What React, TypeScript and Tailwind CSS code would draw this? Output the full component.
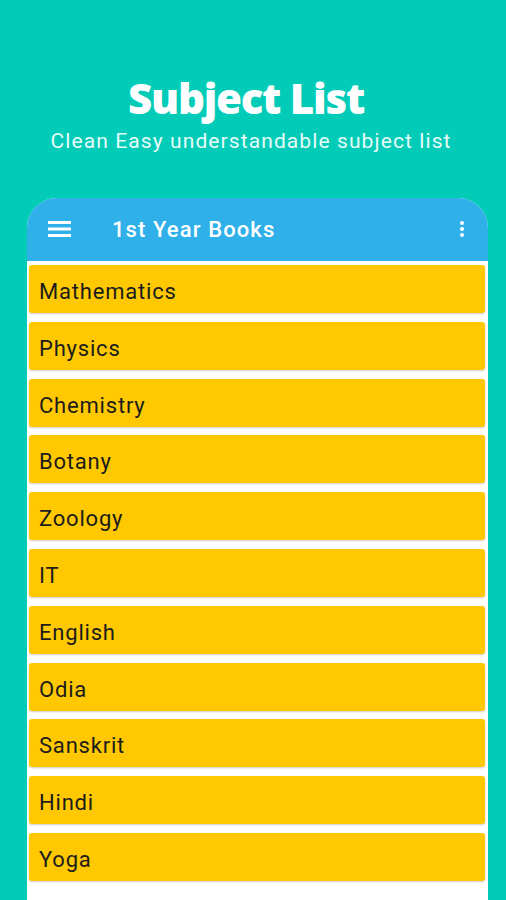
import React from "react";

const subjects = [
  "Mathematics",
  "Physics",
  "Chemistry",
  "Botany",
  "Zoology",
  "IT",
  "English",
  "Odia",
  "Sanskrit",
  "Hindi",
  "Yoga",
];

export default function App() {
  return (
    <div className="w-[506px] h-[900px] overflow-hidden bg-[#02ccb8] flex flex-col">
      <div className="pt-[74px] flex flex-col items-center">
        <h1
          className="text-white font-extrabold text-[42px] leading-[48px] tracking-[-1.25px] ml-[-14px]"
          style={{ fontFamily: '"Open Sans", sans-serif' }}
        >
          Subject List
        </h1>
        <p
          className="text-[#e6fbf7] text-[21px] leading-[26px] mt-[6px] tracking-[1.1px] ml-[-4px]"
          style={{ fontFamily: 'Roboto, sans-serif' }}
        >
          Clean Easy understandable subject list
        </p>
      </div>
      <div className="mt-[44px] ml-[27px] w-[461px] flex-1 rounded-t-[30px] bg-white overflow-hidden flex flex-col">
        <div className="h-[63px] bg-[#2fb0e9] flex items-center pl-[21px] pr-[24px] shrink-0">
          <svg width="23" height="16" viewBox="0 0 23 16" className="mt-[-2px]">
            <rect x="0" y="0" width="23" height="3" fill="#ffffff" />
            <rect x="0" y="6.5" width="23" height="3" fill="#ffffff" />
            <rect x="0" y="13" width="23" height="3" fill="#ffffff" />
          </svg>
          <span
            className="ml-[41px] text-white text-[22px] font-medium tracking-[1.1px]"
            style={{ fontFamily: 'Roboto, sans-serif' }}
          >
            1st Year Books
          </span>
          <div className="ml-auto flex flex-col gap-[2px] items-center mt-[-2px]">
            <span className="block w-[4px] h-[4px] rounded-full bg-white" />
            <span className="block w-[4px] h-[4px] rounded-full bg-white" />
            <span className="block w-[4px] h-[4px] rounded-full bg-white" />
          </div>
        </div>
        <div className="flex flex-col gap-[8.8px] pt-[4px] pl-[2px] pr-[3px]">
          {subjects.map((s) => (
            <div
              key={s}
              className="h-[48px] bg-[#ffc800] rounded-[3px] shadow-[0_1px_2px_rgba(0,0,0,0.2)] flex items-center pl-[10px] pt-[5px]"
            >
              <span
                className="text-[#1c1c1c] text-[22px] tracking-[0.8px]"
                style={{ fontFamily: 'Roboto, sans-serif' }}
              >
                {s}
              </span>
            </div>
          ))}
        </div>
      </div>
    </div>
  );
}
